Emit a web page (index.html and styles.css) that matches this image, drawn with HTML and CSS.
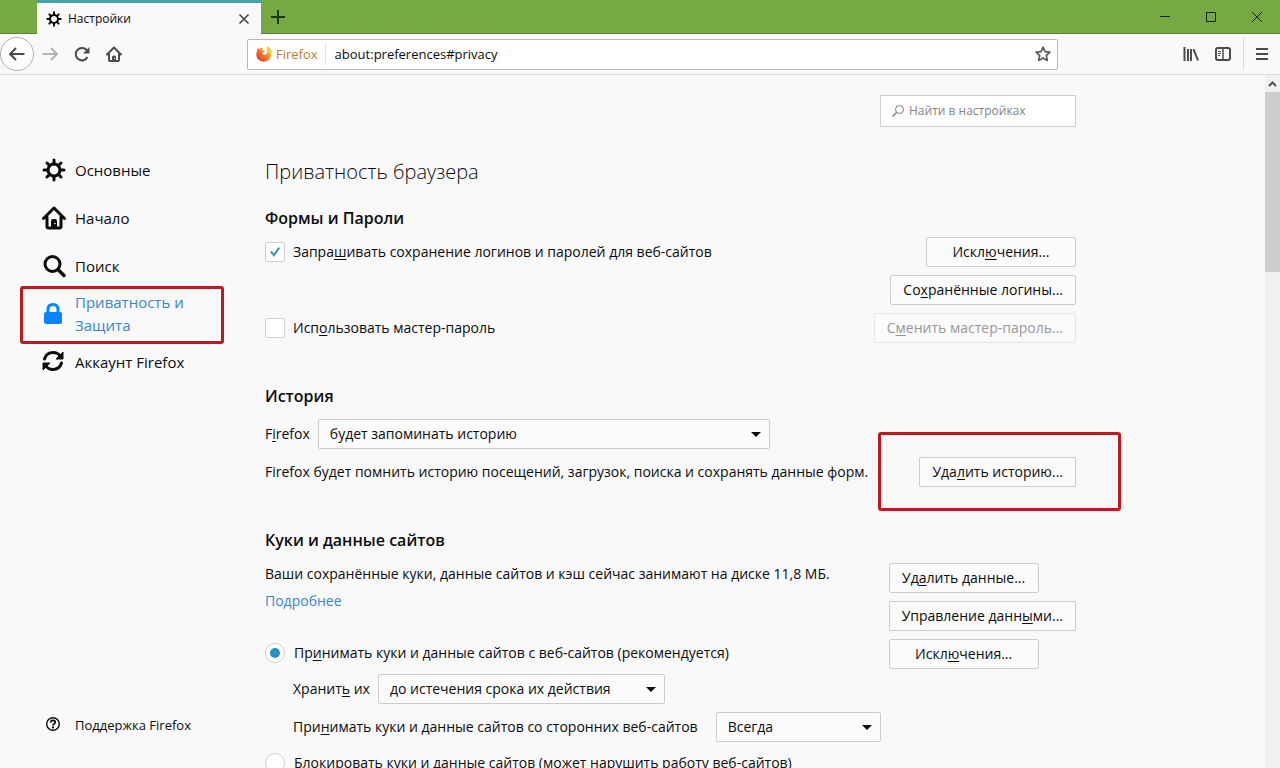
FILE: index.html
```html
<!DOCTYPE html>
<html lang="ru">
<head>
    <meta charset="utf-8">
    <title>Настройки</title>
    <link rel="stylesheet" href="styles.css">
</head>
<body>
<svg class="sprite">
    <symbol id="gear" viewBox="0 0 24 24">
        <circle cx="12" cy="12" r="6" fill="none" stroke="currentColor" stroke-width="3"/>
        <path d="M12 2v4M12 18v4M2 12h4M18 12h4M5 5l2.8 2.8M16.200 16.200L19 19M19 5l-2.800 2.800M7.800 16.200L5 19" fill="none" stroke="currentColor" stroke-width="3" stroke-linecap="round"/>
    </symbol>
    <symbol id="home" viewBox="0 0 24 24">
        <path d="M1.500 12.500L12 2l10.500 10.500M5 11v9.500q0 1.500 1.500 1.500h11q1.500 0 1.500-1.500V11" fill="none" stroke="currentColor" stroke-width="3" stroke-linecap="round" stroke-linejoin="round"/>
        <path d="M9 22v-7q0-2 2-2h2q2 0 2 2v7z" fill="currentColor"/>
        <circle cx="13" cy="17.500" r="0.800" fill="#f9f9fa"/>
    </symbol>
</svg>

<header>
    <div class="titlebar">
        <div class="tab">
            <svg class="tab-icon"><use href="#gear"/></svg>
            <span>Настройки</span>
            <button type="button" class="tab-close" aria-label="Закрыть вкладку">
                <svg width="12" height="12" viewBox="0 0 12 12"><path d="M1.500 1.500l9 9M10.500 1.500l-9 9" stroke="#4a4a4f" stroke-width="1.700"/></svg>
            </button>
        </div>
        <button type="button" class="new-tab" aria-label="Новая вкладка">
            <svg width="14" height="14" viewBox="0 0 14 14"><path d="M7 0v14M0 7h14" stroke="#173a12" stroke-width="2"/></svg>
        </button>
        <div class="window-buttons">
            <button type="button" aria-label="Свернуть"><svg width="10" height="10" viewBox="0 0 10 10"><path d="M0 4.500h10" stroke="#10250c"/></svg></button>
            <button type="button" aria-label="Развернуть"><svg width="10" height="10" viewBox="0 0 10 10"><path d="M.5.5h9v9h-9z" fill="none" stroke="#10250c"/></svg></button>
            <button type="button" aria-label="Закрыть"><svg width="10" height="10" viewBox="0 0 10 10"><path d="M0 0l10 10M10 0L0 10" stroke="#10250c"/></svg></button>
        </div>
    </div>

    <div class="toolbar">
        <button type="button" class="back" aria-label="Назад">
            <svg width="16" height="16" viewBox="0 0 16 16"><path d="M15.500 8H1.500M7 2L1 8l6 6" fill="none" stroke="#4a4a4f" stroke-width="2" stroke-linejoin="round"/></svg>
        </button>
        <button type="button" class="tool" aria-label="Вперёд" disabled>
            <svg width="16" height="16" viewBox="0 0 16 16"><path d="M.5 8h14M9 2l6 6-6 6" fill="none" stroke="#b4b4b6" stroke-width="2" stroke-linejoin="round"/></svg>
        </button>
        <button type="button" class="tool" aria-label="Обновить">
            <svg width="16" height="16" viewBox="0 0 16 16"><path d="M13 4.500A6.200 6.200 0 1 0 13.500 11" fill="none" stroke="#4a4a4f" stroke-width="2"/><path d="M15.500 1v6.500H9z" fill="#4a4a4f"/></svg>
        </button>
        <button type="button" class="tool" aria-label="Домой">
            <svg width="16" height="16" viewBox="0 0 16 16"><path d="M1 8.500l7-7 7 7M3 8v6q0 1 1 1h8q1 0 1-1V8" fill="none" stroke="#4a4a4f" stroke-width="2" stroke-linecap="round" stroke-linejoin="round"/><path d="M6 15v-4q0-1.500 1.500-1.500h1Q10 9.500 10 11v4z" fill="#4a4a4f"/><path d="M8 12h1v1H8z" fill="#fff"/></svg>
        </button>

        <div class="urlbar">
            <svg width="16" height="16" viewBox="0 0 16 16">
                <defs>
                    <linearGradient id="fox" x1="1" y1="0" x2="0" y2="1">
                        <stop offset="0" stop-color="#ffd83b"/>
                        <stop offset=".45" stop-color="#ff8a1c"/>
                        <stop offset="1" stop-color="#e3174f"/>
                    </linearGradient>
                </defs>
                <path d="M1 5q0-2 1.200-3.200l1 1.400Q5 1.500 7.200 1.800 6 2.600 6 4l2.500.8q.4.600-1.300 1.400L6.300 8q2 1.400 4 .2 2-1.700.7-4.200-.6-1.500.4-3.600 2.300 1 3.400 3.300l.6 1Q16.200 9.500 13.400 13 10.400 16 6.700 15.600 2.300 14.800.7 11-.2 8 1 5z" fill="url(#fox)"/>
                <path d="M11.400.4q2.300 1 3.400 3.300l.6 1q.5 4-1.400 6.300 0-3.200-1.600-5-1.800-2.500-1-5.600z" fill="#ffcb2e"/>
            </svg>
            <span class="identity">Firefox</span>
            <input type="text" value="about:preferences#privacy" aria-label="Адрес">
            <button type="button" class="star" aria-label="Добавить в закладки">
                <svg width="16" height="16" viewBox="0 0 16 16"><path d="M8 1.200l2 4.500 4.900.5-3.600 3.300 1 4.900L8 12l-4.300 2.400 1-4.900L1.100 6.200 6 5.700z" fill="none" stroke="#5a5a5f" stroke-width="1.700" stroke-linejoin="round"/></svg>
            </button>
        </div>

        <button type="button" class="tool" aria-label="Библиотека">
            <svg width="16" height="16" viewBox="0 0 16 16"><path d="M1.500 1v14M5 3v12M8 3v12M10.500 3.200L15 14.500" fill="none" stroke="#4a4a4f" stroke-width="2"/></svg>
        </button>
        <button type="button" class="tool" aria-label="Боковая панель">
            <svg width="16" height="16" viewBox="0 0 16 16"><rect x="1" y="2" width="14" height="12" rx="2" fill="none" stroke="#4a4a4f" stroke-width="2"/><path d="M8 2v12" stroke="#4a4a4f" stroke-width="1.500"/><path d="M3 5.500h3M3 7.500h3M3 9.500h2" stroke="#4a4a4f"/></svg>
        </button>
        <button type="button" class="menu" aria-label="Меню">
            <svg width="12" height="14" viewBox="0 0 12 14"><path d="M0 2h12M0 7h12M0 12h12" stroke="#4a4a4f" stroke-width="2"/></svg>
        </button>
    </div>
</header>

<div class="page">
    <nav>
        <a href="#general"><svg><use href="#gear"/></svg>Основные</a>
        <a href="#home-page"><svg><use href="#home"/></svg>Начало</a>
        <a href="#search"><svg viewBox="0 0 24 24"><circle cx="10.500" cy="10" r="7.500" fill="none" stroke="currentColor" stroke-width="3"/><path d="M16 15.500l6 6" stroke="currentColor" stroke-width="3.500" stroke-linecap="round"/></svg>Поиск</a>
        <a href="#privacy" class="selected marked"><svg viewBox="0 0 24 24"><path d="M6 11V7.500q0-5 5-5t5 5V11" fill="none" stroke="currentColor" stroke-width="3"/><rect x="2" y="10" width="18" height="12" rx="2" fill="currentColor"/></svg>Приватность и Защита</a>
        <a href="#sync"><svg viewBox="0 0 24 24"><path d="M2.500 9Q4.500 2.500 11 2.500q5 0 7.500 4M19.500 13q-2 6.500-8.500 6.500-5 0-7.500-4" fill="none" stroke="currentColor" stroke-width="3" stroke-linecap="round"/><path d="M21 2v7h-7zM1 20v-7h7z" fill="currentColor" stroke="currentColor" stroke-linejoin="round"/></svg>Аккаунт Firefox</a>
        <a href="#support" class="support"><svg viewBox="0 0 24 24"><circle cx="11" cy="11" r="6.300" fill="none" stroke="currentColor" stroke-width="1.400"/><path d="M8.800 9.600q0-2.200 2.200-2.200t2.200 1.900q0 1-1 1.500-1.200.6-1.200 1.700" fill="none" stroke="currentColor" stroke-width="1.800"/><circle cx="11" cy="14.400" r="1.100" fill="currentColor"/></svg>Поддержка Firefox</a>
    </nav>

    <main>
        <div class="search">
            <svg width="14" height="14" viewBox="0 0 14 14"><circle cx="8.500" cy="5.500" r="4" fill="none" stroke="#77777a"/><path d="M5.500 8.500L1.500 12.500" stroke="#77777a" stroke-width="1.300"/></svg>
            <input type="text" placeholder="Найти в настройках" aria-label="Найти в настройках">
        </div>

        <h1>Приватность браузера</h1>

        <section class="forms">
            <h2>Формы и Пароли</h2>
            <div class="row">
                <label><input type="checkbox" checked><span>Запра<u>ш</u>ивать сохранение логинов и паролей для веб-сайтов</span></label>
                <button type="button">Искл<u>ю</u>чения...</button>
            </div>
            <div class="row end">
                <button type="button">Со<u>х</u>ранённые логины...</button>
            </div>
            <div class="row">
                <label><input type="checkbox"><span>Исп<u>о</u>льзовать мастер-пароль</span></label>
                <button type="button" disabled>С<u>м</u>енить мастер-пароль...</button>
            </div>
        </section>

        <section>
            <h2>История</h2>
            <div class="row start">
                <label for="history"><span>F<u>i</u>refox</span></label>
                <div class="select history">
                    <select id="history"><option>будет запоминать историю</option></select>
                </div>
            </div>
            <div class="row">
                <p>Firefox будет помнить историю посещений, загрузок, поиска и сохранять данные форм.</p>
                <div class="marked">
                    <button type="button">Уда<u>л</u>ить историю...</button>
                </div>
            </div>
        </section>

        <section>
            <h2>Куки и данные сайтов</h2>
            <div class="cookies">
                <div class="options">
                    <p>Ваши сохранённые куки, данные сайтов и кэш сейчас занимают на диске 11,8 МБ.</p>
                    <p><a href="#more">Подробнее</a></p>
                    <div class="row radio">
                        <label><input type="radio" name="cookies" checked><span>Пр<u>и</u>нимать куки и данные сайтов с веб-сайтов (рекомендуется)</span></label>
                    </div>
                    <div class="row start indent">
                        <label for="keep"><span>Хранит<u>ь</u> их</span></label>
                        <div class="select keep">
                            <select id="keep"><option>до истечения срока их действия</option></select>
                        </div>
                    </div>
                    <div class="row indent">
                        <label for="third"><span>При<u>н</u>имать куки и данные сайтов со сторонних веб-сайтов</span></label>
                        <div class="select third">
                            <select id="third"><option>Всегда</option></select>
                        </div>
                    </div>
                    <div class="row radio">
                        <label><input type="radio" name="cookies"><span><u>Б</u>локировать куки и данные сайтов (может нарушить работу веб-сайтов)</span></label>
                    </div>
                </div>
                <div class="buttons">
                    <button type="button">Уд<u>а</u>лить данные...</button>
                    <button type="button">Управление данн<u>ы</u>ми...</button>
                    <button type="button">Искл<u>ю</u>чения...</button>
                </div>
            </div>
        </section>
    </main>

    <div class="scrollbar">
        <svg width="15" height="17" viewBox="0 0 15 17"><path d="M4 11l3.500-3.500L11 11" fill="none" stroke="#505050" stroke-width="2"/></svg>
        <div class="thumb"></div>
    </div>
</div>
</body>
</html>
```
FILE: styles.css
```css
* {
    box-sizing: border-box;
}

body {
    margin: 0;
    height: 100vh;
    overflow: hidden;
    display: flex;
    flex-direction: column;
    background: #f9f9fa;
    color: #0c0c0d;
    font-family: "Open Sans", "Noto Sans", sans-serif;
    font-size: 14px;
    line-height: 22px;
}

button, input, select {
    font: inherit;
    color: inherit;
}

h1, h2, p {
    margin: 0;
}

svg {
    flex: none;
}

.sprite {
    display: none;
}

/* tabs */
.titlebar {
    display: flex;
    height: 34px;
    padding-left: 37px;
    background: #76a844;
    box-shadow: inset 0 -1px #5d7f3b;
}

.titlebar button, .toolbar button {
    display: flex;
    align-items: center;
    justify-content: center;
    padding: 0;
    border: 0;
    background: none;
}

.tab {
    display: flex;
    align-items: center;
    width: 224px;
    padding: 0 11px 0 9px;
    border-top: 3px solid #46a0a8;
    background: #f9f9fa;
    font-size: 12px;
}

.tab-icon {
    width: 16px;
    height: 16px;
    margin-right: 6px;
}

.tab .tab-close {
    margin-left: auto;
}

.titlebar .new-tab {
    width: 34px;
}

.window-buttons {
    display: flex;
    margin-left: auto;
}

.window-buttons button {
    width: 46px;
}

/* toolbar */
.toolbar {
    display: flex;
    align-items: center;
    height: 41px;
    border-bottom: 1px solid #dcdcdd;
}

.toolbar .back {
    width: 34px;
    height: 34px;
    border: 1px solid #b1b1b3;
    border-radius: 50%;
    background: #fff;
}

.toolbar .tool {
    width: 32px;
    height: 32px;
}

.toolbar .menu {
    width: 37px;
    height: 32px;
    margin-left: 4px;
    border-left: 1px solid #dcdcdd;
}

.urlbar {
    flex: 1;
    display: flex;
    align-items: center;
    height: 31px;
    margin: 0 117px;
    padding: 0 6px 0 8px;
    border: 1px solid #b9b9bb;
    border-radius: 2px;
    background: #fff;
    font-size: 13px;
}

.identity {
    margin-left: 4px;
    padding-right: 7px;
    border-right: 1px solid #e2e2e3;
    color: #c47a35;
}

.urlbar input {
    flex: 1;
    padding: 0 9px;
    border: 0;
    background: none;
    outline: none;
}

/* page */
.page {
    flex: 1;
    min-height: 0;
    display: flex;
}

nav {
    display: flex;
    flex-direction: column;
    width: 265px;
    padding: 71px 41px 19px 42px;
}

nav a {
    position: relative;
    display: flex;
    align-items: center;
    gap: 9px;
    height: 48px;
    color: inherit;
    font-size: 15px;
    line-height: 23px;
    text-decoration: none;
}

nav svg {
    width: 24px;
    height: 24px;
}

nav .selected {
    color: #3a87c8;
}

nav .selected svg {
    color: #0a84ff;
}

nav .support {
    margin-top: auto;
    font-size: 13px;
}

main {
    flex: 1;
    max-width: 811px;
    padding-top: 20px;
}

.search {
    display: flex;
    align-items: center;
    gap: 4px;
    width: 196px;
    height: 32px;
    margin-left: auto;
    padding: 0 10px;
    border: 1px solid #cfcfd0;
    background: #fff;
    font-size: 12px;
}

.search input {
    width: 100%;
    padding: 0;
    border: 0;
    outline: none;
}

.search input::placeholder {
    color: #858588;
}

h1 {
    margin: 30px 0 19px;
    font-size: 20px;
    font-weight: 300;
    line-height: 30px;
}

h2 {
    margin-bottom: 11px;
    font-size: 16px;
    font-weight: 600;
    line-height: 24px;
}

section {
    margin-bottom: 41px;
}

.forms h2 {
    margin-bottom: 7px;
}

.row {
    display: flex;
    align-items: center;
    justify-content: space-between;
    height: 30px;
    margin-bottom: 8px;
    white-space: nowrap;
}

.row.start {
    justify-content: flex-start;
    gap: 8px;
}

.row.end {
    justify-content: flex-end;
}

.row.radio {
    height: 26px;
}

.row label {
    display: flex;
    align-items: center;
}

.indent {
    padding-left: 28px;
}

u {
    text-underline-offset: 2px;
}

main button {
    min-width: 150px;
    height: 30px;
    padding: 0 12px;
    border: 1px solid #cdcdce;
    border-radius: 2px;
    background: #fbfbfb;
}

main button:disabled {
    border-color: #e4e4e5;
    color: #98989a;
}

input[type="checkbox"], input[type="radio"] {
    appearance: none;
    display: grid;
    place-items: center;
    width: 20px;
    height: 20px;
    margin: 0 8px 0 0;
    border: 1px solid #cfcfd1;
    border-radius: 2px;
    background: #fff;
}

input[type="radio"] {
    margin-right: 9px;
    border-radius: 50%;
}

input[type="checkbox"]:checked::before {
    content: "";
    width: 10px;
    height: 10px;
    background: #3a95bd;
    clip-path: polygon(0 50%, 18% 38%, 38% 65%, 84% 0, 100% 12%, 40% 100%);
}

input[type="radio"]:checked::before {
    content: "";
    width: 10px;
    height: 10px;
    border-radius: 50%;
    background: #2590c5;
}

.select {
    position: relative;
}

.select::after {
    content: "";
    position: absolute;
    top: 13px;
    right: 9px;
    border: 5px solid transparent;
    border-top-color: #0c0c0d;
    border-bottom: 0;
    pointer-events: none;
}

select {
    appearance: none;
    width: 100%;
    height: 30px;
    padding: 0 11px;
    border: 1px solid #cdcdce;
    border-radius: 2px;
    background: #fbfbfb;
}

.history {
    width: 452px;
}

.keep {
    width: 287px;
}

.third {
    width: 165px;
}

.cookies {
    display: flex;
    gap: 8px;
}

.options {
    flex: 1;
    min-width: 0;
}

.options p {
    margin-bottom: 5px;
    white-space: nowrap;
}

.options p + .row {
    margin-top: 28px;
}

.options a {
    color: #3a87c8;
    text-decoration: none;
}

.buttons {
    display: flex;
    flex-direction: column;
    align-items: flex-start;
    gap: 8px;
}

/* red frames around the two places to click */
.marked {
    position: relative;
}

.marked::before {
    content: "";
    position: absolute;
    inset: -4px 0 -6px -22px;
    border: 3px solid #bb1c1e;
    border-radius: 3px;
    pointer-events: none;
}

.row .marked::before {
    inset: -25px -45px -24px -41px;
}

.scrollbar {
    width: 15px;
    margin-left: auto;
    background: #f0f0f0;
}

.scrollbar svg {
    display: block;
}

.thumb {
    height: 180px;
    background: #cdcdcd;
}
```
